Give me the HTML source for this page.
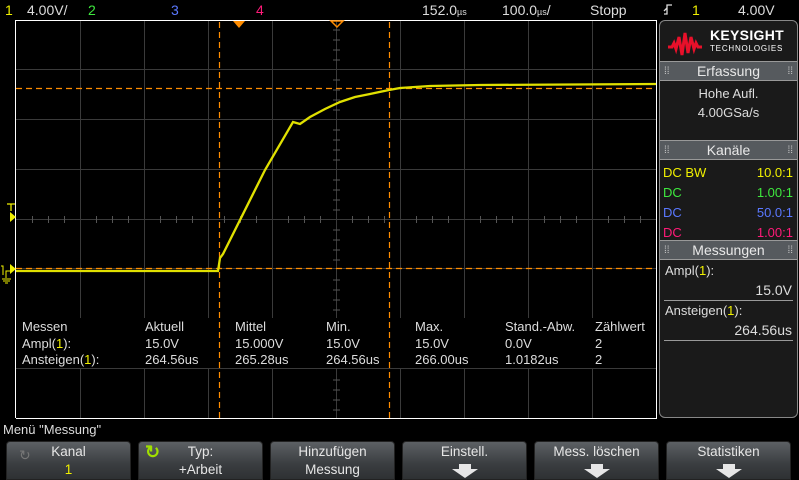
<!DOCTYPE html>
<html><head><meta charset="utf-8"><style>
*{margin:0;padding:0;box-sizing:border-box}
body{width:799px;height:480px;background:#000;overflow:hidden;position:relative;font-family:"Liberation Sans",sans-serif;color:#ddd;font-size:13px}
.t{position:absolute;white-space:nowrap;line-height:1}
.y{color:#f0f000}
.panel{position:absolute;left:659px;top:20px;width:139px;height:398px;background:#1a1a1a;border:1px solid #888;border-radius:6px}
.hdr{position:absolute;left:0;width:137px;height:20px;background:#565a5e;border-top:1px solid #999;border-bottom:1px solid #999;text-align:center;font-size:14px;color:#e8e8e8;line-height:19px}
.hdr:before,.hdr:after{content:"⁞⁞";position:absolute;top:0;font-size:10px;color:#ccc}
.hdr:before{left:4px}.hdr:after{right:4px}
.btn{position:absolute;top:441px;width:125px;height:39px;border-radius:4px 4px 0 0;background:linear-gradient(#5c6064,#3a3d40 60%,#2e3133);border:1px solid #222;text-align:center;color:#e6e6e6;font-size:13.5px;line-height:18px;padding-top:1px}
.arr{width:0;height:0;margin:3px auto 0;border-left:13px solid transparent;border-right:13px solid transparent;border-top:9px solid #e6e6e6;position:relative}
.arr:before{content:"";position:absolute;left:-6px;top:-14px;width:12px;height:5px;background:#e6e6e6}
</style></head><body>
<div class="t y" style="left:5px;top:3px;font-size:14px">1</div>
<div class="t" style="left:27px;top:3px;font-size:14px">4.00V/</div>
<div class="t" style="left:88px;top:3px;font-size:14px;color:#3ee83e">2</div>
<div class="t" style="left:171px;top:3px;font-size:14px;color:#5a78ff">3</div>
<div class="t" style="left:256px;top:3px;font-size:14px;color:#ff1a78">4</div>
<div class="t" style="left:422px;top:3px;font-size:14px">152.0<span style="font-size:9px">µs</span></div>
<div class="t" style="left:502px;top:3px;font-size:14px">100.0<span style="font-size:9px">µs</span>/</div>
<div class="t" style="left:590px;top:3px;font-size:14px">Stopp</div>
<svg style="position:absolute;left:663px;top:3px" width="10" height="13"><path d="M1 11h3V2h5M4 5l-3 3" stroke="#ddd" stroke-width="1.3" fill="none"/></svg>
<div class="t y" style="left:692px;top:3px;font-size:14px">1</div>
<div class="t" style="left:738px;top:3px;font-size:14px">4.00V</div>

<svg style="position:absolute;left:0;top:0" width="660" height="440">
<g stroke="#3a3a3a" stroke-width="1">
<line x1="80.5" y1="20" x2="80.5" y2="418"/><line x1="144.5" y1="20" x2="144.5" y2="418"/><line x1="208.5" y1="20" x2="208.5" y2="418"/><line x1="272.5" y1="20" x2="272.5" y2="418"/><line x1="336.5" y1="20" x2="336.5" y2="418"/><line x1="400.5" y1="20" x2="400.5" y2="418"/><line x1="464.5" y1="20" x2="464.5" y2="418"/><line x1="528.5" y1="20" x2="528.5" y2="418"/><line x1="592.5" y1="20" x2="592.5" y2="418"/>
<line x1="16" y1="69.5" x2="656" y2="69.5"/><line x1="16" y1="119.5" x2="656" y2="119.5"/><line x1="16" y1="169.5" x2="656" y2="169.5"/><line x1="16" y1="219.5" x2="656" y2="219.5"/><line x1="16" y1="268.5" x2="656" y2="268.5"/><line x1="16" y1="318.5" x2="656" y2="318.5"/><line x1="16" y1="368.5" x2="656" y2="368.5"/>
</g>
<g stroke="#555" stroke-width="1">
<path d="M32.5 216v7M48.5 216v7M64.5 216v7M96.5 216v7M112.5 216v7M128.5 216v7M160.5 216v7M176.5 216v7M192.5 216v7M224.5 216v7M240.5 216v7M256.5 216v7M288.5 216v7M304.5 216v7M320.5 216v7M352.5 216v7M368.5 216v7M384.5 216v7M416.5 216v7M432.5 216v7M448.5 216v7M480.5 216v7M496.5 216v7M512.5 216v7M544.5 216v7M560.5 216v7M576.5 216v7M608.5 216v7M624.5 216v7M640.5 216v7"/>
<path d="M333 30h7M333 40h7M333 50h7M333 60h7M333 80h7M333 90h7M333 100h7M333 110h7M333 130h7M333 140h7M333 150h7M333 160h7M333 180h7M333 190h7M333 200h7M333 210h7M333 230h7M333 240h7M333 250h7M333 260h7M333 280h7M333 290h7M333 300h7M333 310h7M333 330h7M333 340h7M333 350h7M333 360h7M333 380h7M333 390h7M333 400h7M333 410h7"/>
</g>
<rect x="16" y="318" width="640" height="50" fill="#000"/>
<path d="M16 20.5H656.5V418.5H16" fill="none" stroke="#fff" stroke-width="1"/>
<line x1="15.5" y1="20" x2="15.5" y2="418" stroke="#fff"/>
<g stroke="#ff8c00" stroke-width="1.2" stroke-dasharray="6,4">
<line x1="16" y1="88.5" x2="656" y2="88.5"/><line x1="16" y1="268.5" x2="656" y2="268.5"/>
<line x1="219.5" y1="22" x2="219.5" y2="418"/><line x1="389.5" y1="22" x2="389.5" y2="418"/>
</g>
<path d="M16 271H218L220 258L223 254L265 170L293 122L300 124L310 117L325 109L340 102L355 97L370 94L389 90L400 88L430 86L480 85L656 84" fill="none" stroke="#e0e000" stroke-width="2.3"/>
<path d="M233 21h12l-6 7z" fill="#ff8c00"/>
<path d="M331 21h12l-6 6z" fill="none" stroke="#ff8c00" stroke-width="1.5"/>
<path d="M10 212l6 5-6 5z" fill="#f0f000"/>
<path d="M10 264l6 5-6 5z" fill="#f0f000"/>
<path d="M7 204h8M11 204v7" stroke="#f0f000" stroke-width="1.3" fill="none"/>
<path d="M1 266h2v9M6 275v-4h4M6 275v3M2 279h9M3 281h7M5 283h3" stroke="#f0f000" stroke-width="1" fill="none"/>
</svg>

<div class="t" style="left:22px;top:319px;line-height:16.5px">Messen<br>Ampl(<span class="y">1</span>):<br>Ansteigen(<span class="y">1</span>):</div>
<div class="t" style="left:145px;top:319px;line-height:16.5px">Aktuell<br>15.0V<br>264.56us</div>
<div class="t" style="left:235px;top:319px;line-height:16.5px">Mittel<br>15.000V<br>265.28us</div>
<div class="t" style="left:326px;top:319px;line-height:16.5px">Min.<br>15.0V<br>264.56us</div>
<div class="t" style="left:415px;top:319px;line-height:16.5px">Max.<br>15.0V<br>266.00us</div>
<div class="t" style="left:505px;top:319px;line-height:16.5px">Stand.-Abw.<br>0.0V<br>1.0182us</div>
<div class="t" style="left:595px;top:319px;line-height:16.5px">Zählwert<br>2<br>2</div>

<div class="panel">
 <svg style="position:absolute;left:8px;top:10px" width="40" height="26"><path d="M0 16h4l2-4 2 6 3-12 3 18 3-22 3 20 3-16 3 12 2-6 2 4h4" fill="none" stroke="#e8102a" stroke-width="3"/></svg>
 <div class="t" style="left:50px;top:7px;font-size:14px;font-weight:bold;color:#fff;letter-spacing:0.3px">KEYSIGHT</div>
 <div class="t" style="left:50px;top:24px;font-size:8px;color:#fff;letter-spacing:0.8px">TECHNOLOGIES</div>
 <div class="hdr" style="top:40px">Erfassung</div>
 <div class="t" style="left:0;width:137px;text-align:center;top:63px;font-size:13px;line-height:19px">Hohe Aufl.<br>4.00GSa/s</div>
 <div class="hdr" style="top:119px">Kanäle</div>
 <div class="t" style="left:3px;top:142px;line-height:20px"><span class="y">DC BW</span><br><span style="color:#3ee83e">DC</span><br><span style="color:#5a78ff">DC</span><br><span style="color:#ff1a78">DC</span></div>
 <div class="t" style="right:4px;top:142px;line-height:20px;text-align:right"><span class="y">10.0:1</span><br><span style="color:#3ee83e">1.00:1</span><br><span style="color:#5a78ff">50.0:1</span><br><span style="color:#ff1a78">1.00:1</span></div>
 <div class="hdr" style="top:219px">Messungen</div>
 <div class="t" style="left:5px;top:243px">Ampl(<span class="y">1</span>):</div>
 <div class="t" style="right:5px;top:262px;font-size:14px">15.0V</div>
 <div style="position:absolute;left:4px;right:4px;top:279px;border-top:1px solid #999"></div>
 <div class="t" style="left:5px;top:283px">Ansteigen(<span class="y">1</span>):</div>
 <div class="t" style="right:5px;top:302px;font-size:14px">264.56us</div>
 <div style="position:absolute;left:4px;right:4px;top:319px;border-top:1px solid #999"></div>
</div>

<div class="t" style="left:3px;top:423px;font-size:13px">Menü "Messung"</div>
<div class="btn" style="left:6px"><span style="position:absolute;left:12px;top:4px;color:#777;font-size:14px">↻</span>Kanal<br><span class="y">1</span></div>
<div class="btn" style="left:138px"><span style="position:absolute;left:6px;top:1px;color:#a0e000;font-size:18px;font-weight:bold">↻</span>Typ:<br>+Arbeit</div>
<div class="btn" style="left:270px">Hinzufügen<br>Messung</div>
<div class="btn" style="left:402px">Einstell.<div class="arr" style="margin-top:8px"></div></div>
<div class="btn" style="left:534px">Mess. löschen<div class="arr" style="margin-top:8px"></div></div>
<div class="btn" style="left:666px">Statistiken<div class="arr" style="margin-top:8px"></div></div>
</body></html>
